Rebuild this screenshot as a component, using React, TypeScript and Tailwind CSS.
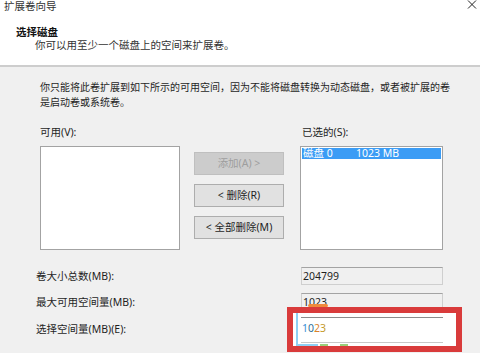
import React from 'react';

const listBorder = 'border border-[#a3a3a3] bg-white';

export default function App() {
  return (
    <div className="w-[480px] h-[353px] overflow-hidden flex flex-col bg-[#f0f0f0] text-[10.5px] text-[#1f1f1f] font-['Noto_Sans','Noto_Sans_CJK_SC',sans-serif]">
      {/* wizard header */}
      <header className="h-[67px] shrink-0 bg-white border-b-2 border-[#cdcdcd]">
        <div className="flex justify-between items-start h-[12px] pl-[4px] pr-[3px]">
          <span className="leading-[12px] text-[#333]">扩展卷向导</span>
          <svg width="10" height="9" viewBox="0 0 10 9">
            <path d="M1 0.5 L9 8.5 M9 0.5 L1 8.5" stroke="#222" strokeWidth="1" fill="none" />
          </svg>
        </div>
        <div className="pl-[16px] mt-[14px] font-bold leading-[12px] text-[#111]">选择磁盘</div>
        <div className="pl-[35px] mt-[1px] leading-[12px] text-[#333]">你可以用至少一个磁盘上的空间来扩展卷。</div>
      </header>

      <main className="flex-1 pl-[36px] pt-[13px] leading-[15px]">
        <p className="pl-[4px] text-[10px]">
          你只能将此卷扩展到如下所示的可用空间，因为不能将磁盘转换为动态磁盘，或者被扩展的卷
          <br />
          是启动卷或系统卷。
        </p>

        <div className="mt-[15px] pl-[4px] flex items-start">
          <div className="w-[140px]">
            <div className="h-[15px]">可用(V):</div>
            <div className={`mt-[6px] h-[104px] ${listBorder}`} />
          </div>

          <div className="ml-[14px] w-[90px] pt-[27px] flex flex-col gap-[9px]">
            <button className="h-[23px] border border-[#bfbfbf] bg-[#cccccc] text-[#9e9e9e]">添加(A) &gt;</button>
            <button className="h-[23px] border border-[#adadad] bg-[#e1e1e1]">&lt; 删除(R)</button>
            <button className="h-[23px] border border-[#adadad] bg-[#e1e1e1]">&lt; 全部删除(M)</button>
          </div>

          <div className="ml-[16px] w-[143px]">
            <div className="h-[15px] pl-[2px]">已选的(S):</div>
            <div className={`mt-[6px] h-[104px] p-[1px] ${listBorder}`}>
              <div className="h-[11px] flex items-center bg-[#3b9cf5] text-white leading-[11px] pl-[1px]">
                <span className="w-[53px]">磁盘 0</span>
                <span>1023 MB</span>
              </div>
            </div>
          </div>
        </div>

        <div className="mt-[17px] flex items-center h-[18px]">
          <span className="w-[265px]">卷大小总数(MB):</span>
          <div className="w-[142px] h-[18px] border border-[#cfcfcf] border-t-[#a3a3a3] bg-[#f0f0f0] pl-[1px] leading-[16px]">204799</div>
        </div>

        <div className="mt-[8px] flex items-center h-[18px]">
          <span className="w-[265px]">最大可用空间量(MB):</span>
          <div className="relative w-[142px] h-[18px] border border-[#cfcfcf] border-t-[#a3a3a3] bg-[#f0f0f0] pl-[1px] leading-[16px]">
            1023
            <span className="absolute left-[6px] top-[10px] w-[20px] h-[3px] bg-[#f08a3c] rounded-sm" />
          </div>
        </div>

        <div className="mt-[-4px] flex items-center">
          <span className="w-[251px]">选择空间量(MB)(E):</span>
          <div className="relative border-[6px] border-[#d93b3b] bg-white pl-[8px] pt-[4px] pr-[13px] pb-[3px]">
            <span className="absolute left-[3px] top-[0px] w-[2px] h-[33px] bg-[#8fd0f4]" />
            <span className="absolute left-[3px] top-[31px] w-[22px] h-[2px] bg-[#8fd0f4]" />
            <span className="absolute left-[27px] top-[31px] w-[8px] h-[2px] bg-[#9ad07a]" />
            <span className="absolute left-[47px] top-[31px] w-[8px] h-[2px] bg-[#9ad07a]" />
            <div className="w-[142px] h-[26px] border-t border-[#8c8c8c] border-b border-b-[#c8c8c8] pl-[1px] pt-[3px] leading-[14px]">
              <span className="text-[#3a8fd3]">1</span>
              <span className="text-[#2f6f9a]">0</span>
              <span className="text-[#d9822b]">2</span>
              <span className="text-[#c59a2a]">3</span>
            </div>
          </div>
        </div>
      </main>
    </div>
  );
}
